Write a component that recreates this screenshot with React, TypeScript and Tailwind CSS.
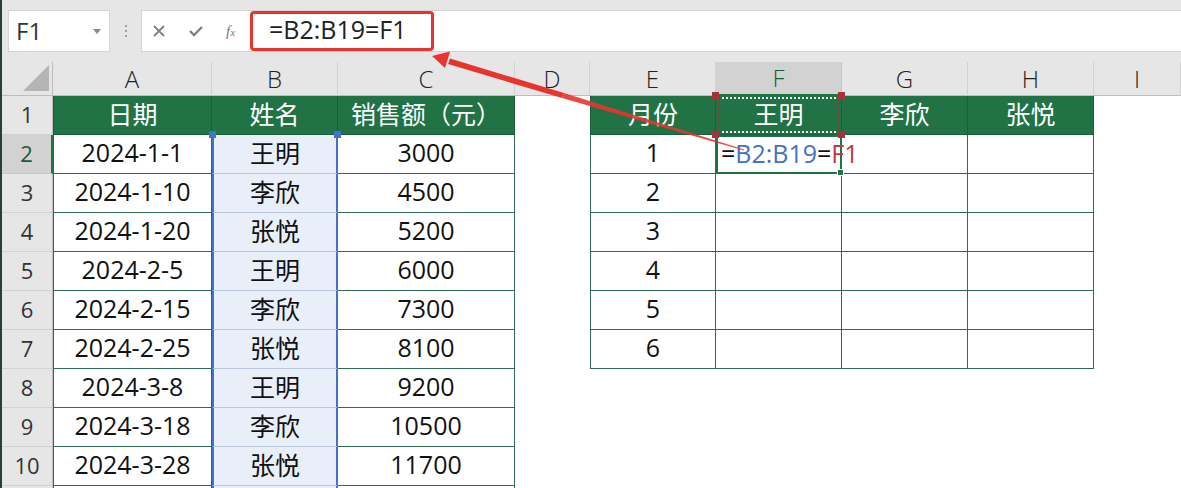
import React from "react";

const FONT = { fontFamily: '"Open Sans", "Noto Sans CJK SC", sans-serif' };

const colLetters = ["A", "B", "C", "D", "E", "F", "G", "H", "I"];

const sales = [
  ["2024-1-1", "王明", "3000"],
  ["2024-1-10", "李欣", "4500"],
  ["2024-1-20", "张悦", "5200"],
  ["2024-2-5", "王明", "6000"],
  ["2024-2-15", "李欣", "7300"],
  ["2024-2-25", "张悦", "8100"],
  ["2024-3-8", "王明", "9200"],
  ["2024-3-18", "李欣", "10500"],
  ["2024-3-28", "张悦", "11700"],
  ["", "", ""],
];

const GRID = "grid grid-cols-[51px_159px_126px_177px_75px_126px_126px_126px_126px_1fr] leading-none overflow-hidden";
const TB = "border-[#2f6b52]";

function Handle({ className }: { className: string }) {
  return <div className={`absolute w-[7px] h-[7px] z-10 ${className}`} />;
}

function HeaderRow() {
  return (
    <div className={`${GRID} h-[34px] grid-rows-[34px]`}>
      <div className="relative bg-[#e6e6e6] border-r border-b border-[#bdbdbd]">
        <svg className="absolute right-[3px] bottom-[4px]" width="26" height="26" viewBox="0 0 26 26">
          <polygon points="26,0 26,26 0,26" fill="#b5b5b5" />
        </svg>
      </div>
      {colLetters.map((l) =>
        l === "F" ? (
          <div
            key={l}
            className="bg-[#d2d2d2] border-r border-[#c6c6c6] border-b-2 border-b-[#217346] flex items-center justify-center text-[24px] text-[#1d5a37] font-light"
          >
            {l}
          </div>
        ) : (
          <div
            key={l}
            className="bg-[#e6e6e6] border-r border-[#d2d2d2] border-b border-b-[#bdbdbd] flex items-center justify-center text-[24px] text-[#222] font-light"
          >
            {l}
          </div>
        )
      )}
    </div>
  );
}

function RowHead({ n, label = true }: { n: number; label?: boolean }) {
  if (n === 2) {
    return (
      <div className="bg-[#d2d2d2] border-b border-[#c8c8c8] border-r-2 border-r-[#217346] flex items-center justify-center pb-[2px] text-[22px] text-[#1d5a37]">
        {n}
      </div>
    );
  }
  return (
    <div className="bg-[#e6e6e6] border-b border-[#d2d2d2] border-r border-r-[#bdbdbd] flex items-center justify-center pb-[2px] text-[22px] text-[#333]">
      {label ? n : null}
    </div>
  );
}

function GreenHead({ text, first, children }: { text: string; first?: boolean; children?: React.ReactNode }) {
  return (
    <div
      className={`relative bg-[#217346] border-r border-b border-[#1b5e3a] ${first ? "border-l" : ""} flex items-center justify-center pb-[1px] text-[25px] text-white`}
    >
      {text}
      {children}
    </div>
  );
}

function Cell({ text, first }: { text?: string; first?: boolean }) {
  return (
    <div
      className={`relative border-r border-b ${TB} ${first ? "border-l" : ""} flex items-center justify-center pb-[3px] text-[25px] text-[#111]`}
    >
      {text}
    </div>
  );
}

function Blank() {
  return <div className="bg-white" />;
}

function Row({ r }: { r: number }) {
  if (r === 1) {
    return (
      <div className={`${GRID} h-[39px] grid-rows-[39px] overflow-visible`}>
        <RowHead n={1} />
        <GreenHead text="日期" first />
        <GreenHead text="姓名" />
        <GreenHead text="销售额（元）" />
        <Blank />
        <GreenHead text="月份" first />
        <GreenHead text="王明">
          <div className="absolute inset-[1px] border-y-2 border-x-2 border-dotted border-y-[#f4f4f4] border-x-[#8e3b3f]" />
          <Handle className="bg-[#a3343a] -left-[4px] -top-[4px]" />
          <Handle className="bg-[#a3343a] -right-[4px] -top-[4px]" />
          <Handle className="bg-[#a3343a] -left-[4px] -bottom-[4px]" />
          <Handle className="bg-[#a3343a] -right-[4px] -bottom-[4px]" />
        </GreenHead>
        <GreenHead text="李欣" />
        <GreenHead text="张悦" />
        <Blank />
      </div>
    );
  }
  const d = sales[r - 2];
  const inRight = r <= 7;
  return (
    <div className={`${GRID} h-[39px] grid-rows-[39px] overflow-visible`}>
      <RowHead n={r} label={r <= 10} />
      <Cell text={d[0]} first />
      <div className="relative bg-[#e8eff9] border-b border-[#b9c6d9] border-x-2 border-x-[#4472c4] flex items-center justify-center pb-[2px] text-[25px] text-[#111]">
        {d[1]}
        {r === 2 && (
          <>
            <Handle className="bg-[#4472c4] -left-[5px] -top-[4px]" />
            <Handle className="bg-[#4472c4] -right-[5px] -top-[4px]" />
          </>
        )}
      </div>
      <Cell text={d[2]} />
      <Blank />
      {inRight ? (
        <>
          <Cell text={String(r - 1)} first />
          {r === 2 ? (
            <div className="relative border-2 border-[#217346] flex items-center pl-[3px] pb-[3px] text-[25px] whitespace-nowrap">
              <span className="text-[#111]">=</span>
              <span className="text-[#4472c4]">B2:B19</span>
              <span className="text-[#111]">=</span>
              <span className="text-[#c0393f]">F1</span>
              <Handle className="bg-[#217346] -right-[4px] -bottom-[4px] w-[6px] h-[6px] border border-white" />
            </div>
          ) : (
            <Cell />
          )}
          <Cell />
          <Cell />
        </>
      ) : (
        <>
          <Blank />
          <Blank />
          <Blank />
          <Blank />
        </>
      )}
      <Blank />
    </div>
  );
}

function FormulaBar() {
  return (
    <div className="h-[62px] bg-[#e6e6e6] flex items-start pt-[10px] pl-[6px] pr-0">
      <div className="w-[102px] h-[42px] bg-white border border-[#d4d4d4] flex items-center justify-between pl-[7px] pr-[8px]">
        <span className="text-[24px] text-[#333]">F1</span>
        <svg width="8" height="5" viewBox="0 0 8 5">
          <polygon points="0,0 8,0 4,5" fill="#8a8a8a" />
        </svg>
      </div>
      <div className="w-[31px] h-[42px] flex flex-col items-center justify-center gap-[3px]">
        <span className="w-[2px] h-[2px] bg-[#a0a0a0]" />
        <span className="w-[2px] h-[2px] bg-[#a0a0a0]" />
        <span className="w-[2px] h-[2px] bg-[#a0a0a0]" />
      </div>
      <div className="flex-1 h-[42px] bg-white border border-[#d4d4d4] border-r-0 flex items-center">
        <div className="flex items-center w-[108px] pl-[10px] gap-[22px] text-[#7a7a7a]">
          <svg width="14" height="14" viewBox="0 0 14 14">
            <path d="M2 2 L12 12 M12 2 L2 12" stroke="#808080" strokeWidth="1.8" />
          </svg>
          <svg width="16" height="14" viewBox="0 0 16 14">
            <path d="M2 7 L6 11 L14 3" stroke="#808080" strokeWidth="2.4" fill="none" />
          </svg>
          <span className="text-[15px] italic text-[#777]" style={{ fontFamily: '"Liberation Serif", serif' }}>
            f<span className="text-[11px]">x</span>
          </span>
        </div>
        <div className="h-[40px] w-[184px] border-[3px] border-[#e8342f] rounded-[4px] flex items-center pl-[16px] pb-[2px] text-[25px] text-[#222]">
          =B2:B19=F1
        </div>
      </div>
    </div>
  );
}

export default function App() {
  const rows = Array.from({ length: 11 }, (_, i) => i + 1);
  return (
    <div className="relative w-[1181px] h-[488px] overflow-hidden bg-white border-l-2 border-[#22403c]" style={FONT}>
      <FormulaBar />
      <HeaderRow />
      {rows.map((r) => (
        <Row key={r} r={r} />
      ))}
      <svg className="absolute left-0 top-0 pointer-events-none z-20" width="1181" height="488" viewBox="0 0 1181 488">
        <polygon points="742,149.5 742,150.5 560,98 562,93" fill="#e8342f" opacity="0.9" />
        <polygon points="562,93 560,98 446,64 448,58.5" fill="#e8342f" />
        <polygon points="430,56 448,51.5 443,68" fill="#e8342f" />
      </svg>
    </div>
  );
}
